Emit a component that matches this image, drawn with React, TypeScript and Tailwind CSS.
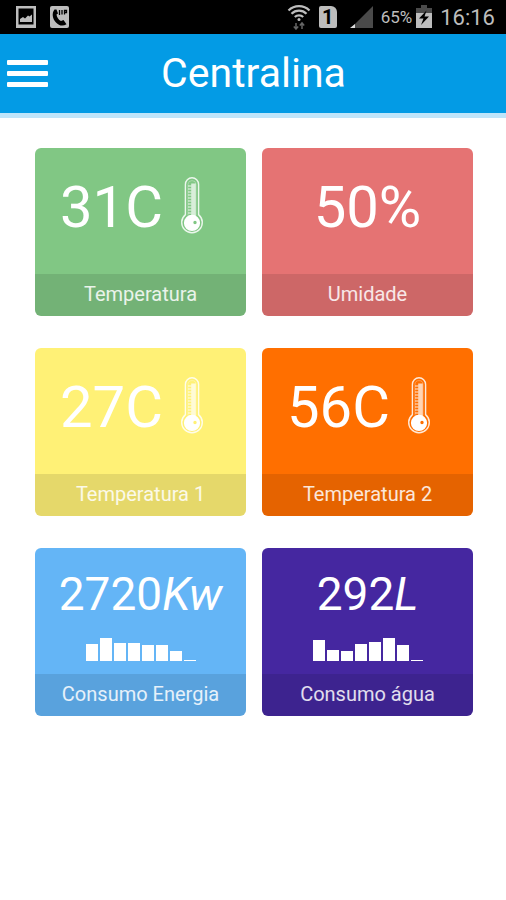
import type { ReactNode } from "react"

interface Reading {
  label: string
  value: string
  unit?: string
  color: string
  thermometer?: boolean
  history?: number[]
}

const READINGS: Reading[] = [
  { label: "Temperatura", value: "31C", color: "bg-[#81c784]", thermometer: true },
  { label: "Umidade", value: "50%", color: "bg-[#e57373]" },
  { label: "Temperatura 1", value: "27C", color: "bg-[#fff176]", thermometer: true },
  { label: "Temperatura 2", value: "56C", color: "bg-[#ff6f00]", thermometer: true },
  { label: "Consumo Energia", value: "2720", unit: "Kw", color: "bg-[#64b5f6]", history: [17, 23, 18, 18, 16, 16, 10, 1] },
  { label: "Consumo água", value: "292", unit: "L", color: "bg-[#4527a0]", history: [21, 11, 10, 17, 19, 23, 16, 1] },
]

const TICKS = [9, 12, 15, 18, 21, 24, 27, 30, 33, 36]

function Thermometer() {
  return (
    <svg viewBox="0 0 58 58" className="size-[58px]" fill="none" aria-hidden="true">
      <path
        d="M22.400 37.600V7.400a6.600 6.600 0 0 1 13.200 0v30.200a10.300 10.300 0 1 1-13.200 0Z"
        stroke="white"
        strokeWidth="1.400"
        strokeOpacity="0.85"
      />
      <path d="M28.200 6.500h4.600v34h-4.600z" fill="white" fillOpacity="0.7" />
      <path d="M25 38.600V7.600a4 4 0 0 1 8 0v31" stroke="white" strokeWidth="0.700" strokeOpacity="0.4" />
      {TICKS.map((y) => (
        <path key={y} d={`M25 ${y}h3.4`} stroke="white" strokeWidth="1.2" strokeOpacity="0.85" />
      ))}
      {/* the highlight is a hole, so the card colour shows through */}
      <path
        fill="white"
        fillRule="evenodd"
        d="M29 37.800a8.100 8.100 0 1 1 0 16.200a8.100 8.100 0 1 1 0-16.200ZM32 43.800a1.700 1.700 0 1 0 0 3.400a1.700 1.700 0 1 0 0-3.400Z"
      />
    </svg>
  )
}

function History({ values }: { values: number[] }) {
  return (
    <div className="mt-[19px] flex h-6 items-end gap-0.5">
      {values.map((v, i) => (
        <span key={i} className="w-3 bg-white" style={{ height: v }} />
      ))}
    </div>
  )
}

function Card({ reading }: { reading: Reading }) {
  const { label, value, unit, color, thermometer, history } = reading
  return (
    <article className={`flex flex-col overflow-hidden rounded-md text-white ${color}`}>
      {history ? (
        <div className="flex h-[126px] flex-col items-center pt-[22px]">
          <p className="text-[46px] leading-[48px]">
            {value}
            <em>{unit}</em>
          </p>
          <History values={history} />
        </div>
      ) : (
        <div className="flex h-[126px] items-start justify-center pt-[29px]">
          <p className="text-[58px] leading-[60px]">{value}</p>
          {thermometer && <Thermometer />}
        </div>
      )}
      <h2 className="bg-black/10 pb-0.5 text-center text-xl leading-10 text-white/85">{label}</h2>
    </article>
  )
}

function StatusIcon({ children, width }: { children: ReactNode; width: string }) {
  return <span className={`flex h-6 shrink-0 ${width}`}>{children}</span>
}

function StatusBar() {
  return (
    <div className="flex h-[34px] items-center bg-black pr-[11px] pl-4 text-[#bdbdbd]">
      <StatusIcon width="w-5">
        <svg viewBox="0 0 20 24" className="h-6 w-5" aria-hidden="true">
          <path fill="currentColor" fillRule="evenodd" d="M0 1h20v22H0zM2.500 3.500v16h15v-16z" />
          <path fill="currentColor" d="M4 17v-3l3-2 2 1.500 3-3 1.500 1L16 9.500V17z" />
        </svg>
      </StatusIcon>
      <span className="w-[14px]" />
      <StatusIcon width="w-[19px]">
        <svg viewBox="0 0 19 24" className="h-6 w-[19px]" aria-hidden="true">
          <rect y="1" width="19" height="22" rx="2" fill="currentColor" />
          <path
            d="M4.500 4.500C1.500 8 2.500 14 6 17.500c3 3.500 7 4 10.500 1.800l-3-4.300-2.500 1C8.500 15 6.800 12 6.500 9.500L8 8.500 6.500 4.500Z"
            fill="black"
          />
          <path d="M9.500 5v5M12 5v4.500M14.500 9.500V5.500h2v2h-2" stroke="black" strokeWidth="1.300" fill="none" />
        </svg>
      </StatusIcon>

      <div className="ml-auto flex items-center">
        <svg viewBox="0 0 24 26" className="h-[26px] w-6" fill="none" stroke="currentColor" aria-hidden="true">
          <path d="M1.500 6.500a15 15 0 0 1 21 0" strokeWidth="2.200" />
          <path d="M4.500 9.800a10.500 10.500 0 0 1 15 0" strokeWidth="2.200" />
          <path d="M7.800 13a6 6 0 0 1 8.400 0" strokeWidth="2.200" />
          <circle cx="12" cy="15.500" r="1.500" fill="currentColor" stroke="none" />
          <path d="M9 19v6M6.800 22.500 9 25l2.200-2.500M15 25v-6M12.800 21.500 15 19l2.200 2.500" stroke="#666" strokeWidth="1.500" />
        </svg>
        <span className="ml-2 flex h-[22px] w-[18px] items-center justify-center rounded-xs rounded-tr-md bg-[#bdbdbd] text-xl leading-5 font-bold text-black">
          1
        </span>
        <svg viewBox="0 0 24 24" className="ml-3 size-6" aria-hidden="true">
          <path d="M24 1v22H2z" fill="#4a4a4a" />
          <path d="M6 19v4H1z" fill="#dddddd" />
        </svg>
        <span className="ml-2 text-[17px] leading-6">65%</span>
        <svg viewBox="0 0 16 24" className="ml-1 h-6 w-4" aria-hidden="true">
          <path d="M5 0h6v3h5v6H0V3h5z" fill="#4a4a4a" />
          <path d="M0 8h16v15H0z" fill="currentColor" />
          <path d="M10.500 5.500 3 13.500h4.500L5 20l8-8.500H8.500z" fill="black" />
        </svg>
        <time className="ml-2 pt-0.5 text-[22px] leading-7">16:16</time>
      </div>
    </div>
  )
}

export default function App() {
  return (
    <div className="min-h-screen bg-white font-['Roboto',sans-serif]">
      <StatusBar />
      <header className="flex h-[84px] items-center border-b-[5px] border-[#bfe5fa] bg-[#039be5] px-[7px] text-white">
        <button type="button" aria-label="Menu" className="flex w-[41px] flex-col gap-[6px]">
          <span className="h-[5px] w-full rounded-[1px] bg-white" />
          <span className="h-[5px] w-full rounded-[1px] bg-white" />
          <span className="h-[5px] w-full rounded-[1px] bg-white" />
        </button>
        <h1 className="flex-1 pr-10 pb-0.5 text-center text-[41px] leading-[48px]">Centralina</h1>
      </header>
      <main className="grid grid-cols-2 gap-x-4 gap-y-8 pt-[30px] pr-[33px] pb-8 pl-[35px]">
        {READINGS.map((r) => (
          <Card key={r.label} reading={r} />
        ))}
      </main>
    </div>
  )
}
